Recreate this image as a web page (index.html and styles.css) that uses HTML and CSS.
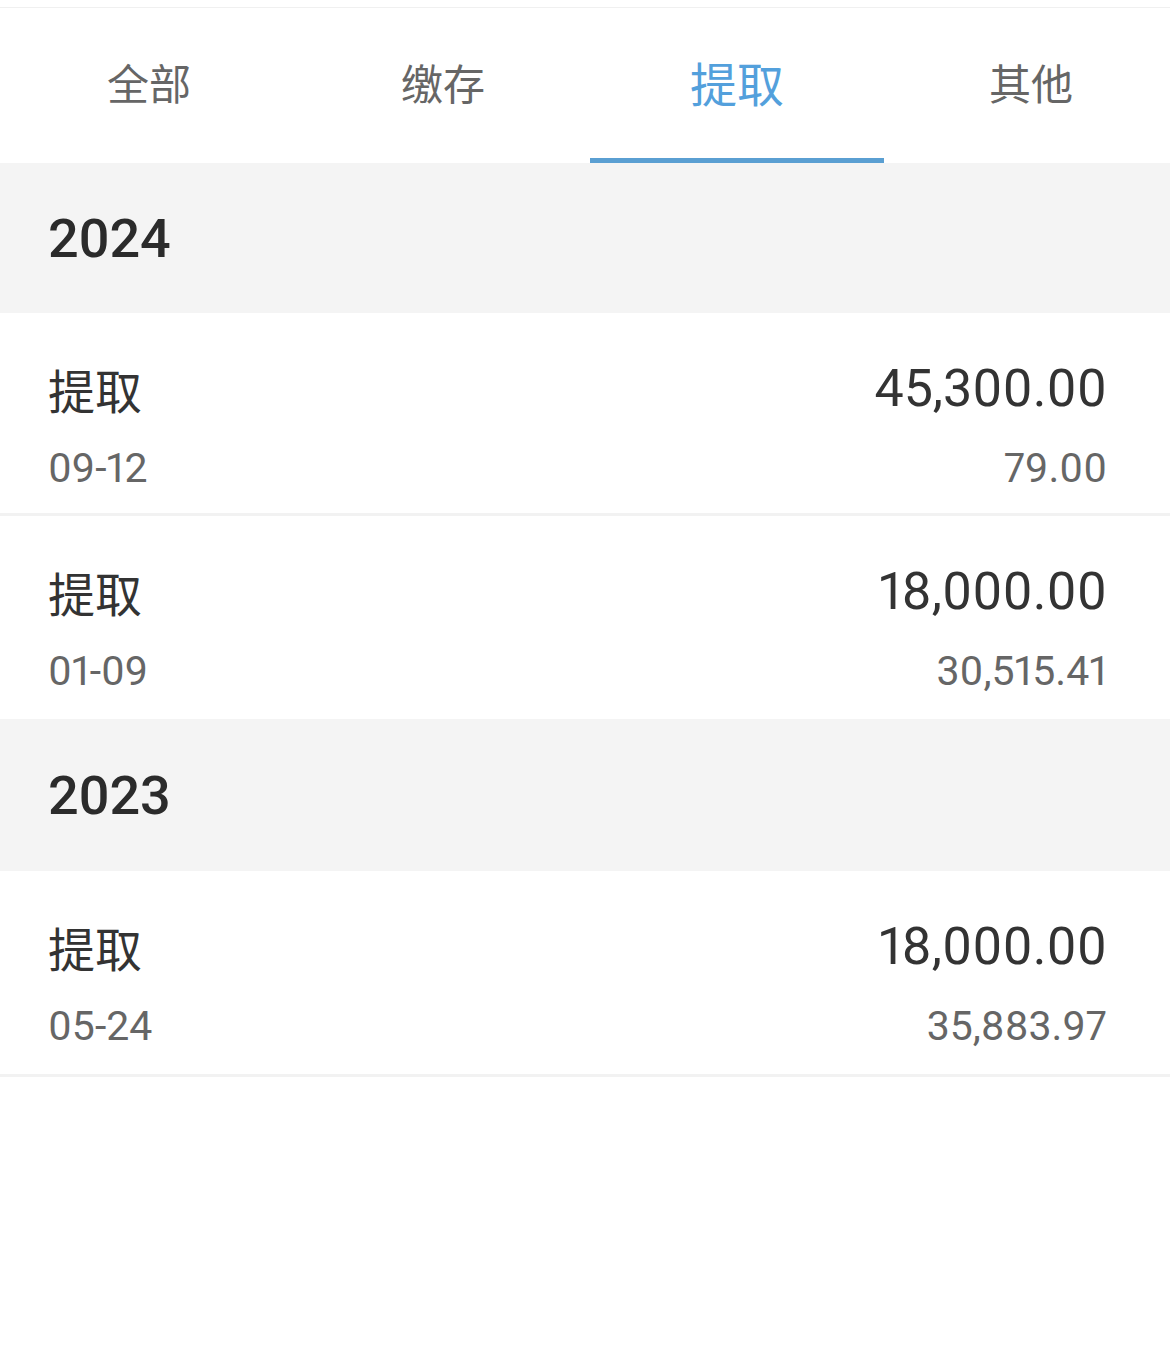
FILE: index.html
```html
<!DOCTYPE html>
<html lang="zh-CN">
<head>
<meta charset="utf-8">
<title>提取</title>
<link rel="stylesheet" href="styles.css">
</head>
<body>
<div class="page">
  <div class="topline"></div>
  <nav class="tabs">
    <div class="tab">全部</div>
    <div class="tab">缴存</div>
    <div class="tab active">提取</div>
    <div class="tab">其他</div>
  </nav>

  <section class="group">
    <div class="year">2024</div>
    <div class="row">
      <div class="col">
        <div class="title">提取</div>
        <div class="sub">09-12</div>
      </div>
      <div class="col right">
        <div class="amount">45,300.00</div>
        <div class="sub">79.00</div>
      </div>
    </div>
    <div class="row">
      <div class="col">
        <div class="title">提取</div>
        <div class="sub">01-09</div>
      </div>
      <div class="col right">
        <div class="amount">18,000.00</div>
        <div class="sub">30,515.41</div>
      </div>
    </div>
  </section>

  <section class="group">
    <div class="year">2023</div>
    <div class="row">
      <div class="col">
        <div class="title">提取</div>
        <div class="sub">05-24</div>
      </div>
      <div class="col right">
        <div class="amount">18,000.00</div>
        <div class="sub">35,883.97</div>
      </div>
    </div>
  </section>
</div>
</body>
</html>
```

FILE: styles.css
```css
html, body {
  margin: 0;
  padding: 0;
  background: #ffffff;
}

body {
  font-family: Roboto, "Noto Sans CJK SC", sans-serif;
  color: #333333;
}

.page {
  width: 1170px;
  overflow: hidden;
}

.topline {
  height: 7px;
  border-bottom: 1px solid #f0f0f0;
}

.tabs {
  display: grid;
  grid-template-columns: repeat(4, 294px);
  padding-left: 2px;
  height: 155px;
}

.tab {
  display: flex;
  align-items: center;
  justify-content: center;
  font-family: "Noto Sans CJK SC", sans-serif;
  font-size: 42px;
  color: #666666;
  padding-bottom: 4px;
  box-sizing: border-box;
  border-bottom: 5px solid transparent;
}

.tab.active {
  font-size: 47px;
  color: #53a0dc;
  border-bottom-color: #5a9fd2;
}

.year {
  background: #f4f4f4;
  height: 150px;
  display: flex;
  align-items: center;
  padding-left: 48px;
  font-size: 54px;
  font-weight: 500;
  color: #2b2b2b;
}

.group:last-of-type .year {
  height: 152px;
}

.row {
  display: flex;
  justify-content: space-between;
  padding: 45px 63px 19px 48px;
  border-bottom: 3px solid #f2f2f2;
}

.group:last-of-type .row:last-child {
  padding-bottom: 22px;
}

.group:first-of-type .row:last-child {
  border-bottom-color: transparent;
}

.col {
  display: flex;
  flex-direction: column;
  gap: 22px;
}

.col.right {
  align-items: flex-end;
}

.title {
  font-family: "Noto Sans CJK SC", sans-serif;
  font-size: 47px;
  line-height: 62px;
  color: #333333;
}

.amount {
  font-size: 52px;
  line-height: 62px;
  color: #333333;
  font-variant-numeric: proportional-nums;
}

.sub {
  font-size: 41px;
  line-height: 52px;
  color: #666666;
  font-variant-numeric: proportional-nums;
}
```
